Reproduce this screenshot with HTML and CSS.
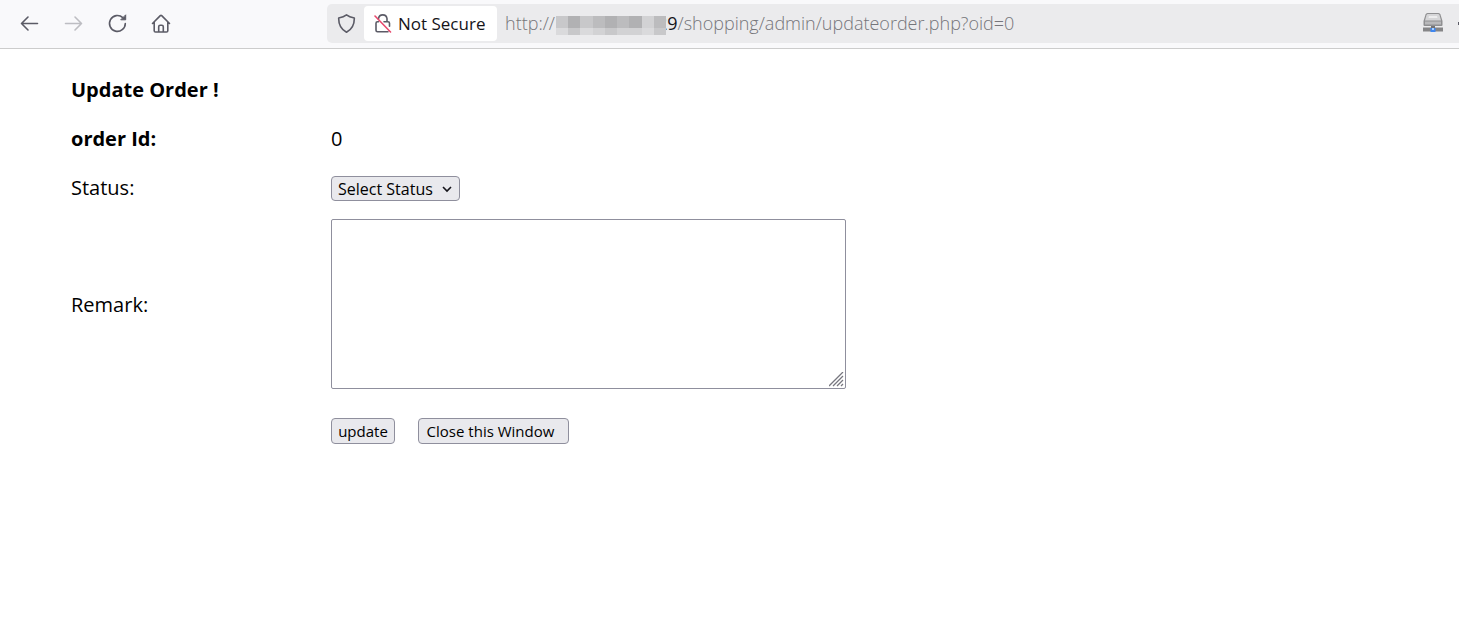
FILE: index.html
```html
<!DOCTYPE html>
<html lang="en">
<head>
<meta charset="utf-8">
<title>Update Order</title>
<link rel="stylesheet" href="styles.css">
</head>
<body>
<header class="toolbar">
  <nav class="nav" aria-label="Browser navigation">
    <button class="nav-btn" type="button" aria-label="Back">
      <svg class="icon" viewBox="0 0 20 20"><path d="M18.500 10.500H2.500M9 4 2.500 10.500 9 17"/></svg>
    </button>
    <button class="nav-btn" type="button" aria-label="Forward" disabled>
      <svg class="icon" viewBox="0 0 20 20"><path d="M2.500 10.500H18.500M12 4 18.500 10.500 12 17"/></svg>
    </button>
    <button class="nav-btn" type="button" aria-label="Reload">
      <svg class="icon" viewBox="0 0 20 20"><path d="M18.300 10.500A7.900 7.900 0 1 1 15.800 4.700"/><path class="solid" d="M18.700 2.200v4.600h-4.600z"/></svg>
    </button>
    <button class="nav-btn" type="button" aria-label="Home">
      <svg class="icon" viewBox="0 0 20 20"><path d="M1.500 10.500 9.300 2.600q.7-.6 1.400 0L18.500 10.500M3.200 9v8.700q0 1.300 1.300 1.300h11q1.300 0 1.300-1.300V9M7.700 18.800v-5q0-1.600 1.500-1.600h1.600q1.500 0 1.500 1.600v5"/></svg>
    </button>
  </nav>
  <div class="urlbar">
    <svg class="icon shield" viewBox="0 0 20 20"><path d="M10.500 1.800c2.200 1.700 4.600 2.500 7.800 3.200.2 6.700-2.300 11.300-7.800 14.200C5 16.300 2.500 11.700 2.700 5 5.900 4.300 8.300 3.500 10.500 1.800z"/></svg>
    <button class="security" type="button">
      <svg class="icon" viewBox="0 0 20 20"><path d="M6.500 6.200V5.500A4.300 4.300 0 0 1 15 5.500v3.300h1q1.500 0 1.500 1.500v3M12 8.800h3M6.500 8.800H5.500Q4 8.800 4 10.300v6.900q0 1.500 1.500 1.500h10.500"/><path class="strike" d="M3 3 18.500 19"/></svg>
      Not Secure
    </button>
    <div class="address">
      <span>http://</span>
      <span class="mosaic" aria-hidden="true">
        <i class="t3"></i><i class="t1"></i><i class="t3"></i><i class="t2"></i><i class="t1"></i><i class="t2"></i><i class="t1"></i><i class="t4"></i><i class="t2"></i>
        <i class="t5"></i><i class="t3"></i><i class="t5"></i><i class="t4"></i><i class="t3"></i><i class="t4"></i><i class="t4"></i><i class="t5"></i><i class="t3"></i>
      </span>
      <span class="host">29</span>
      <span>/shopping/admin/updateorder.php?oid=0</span>
    </div>
    <svg class="drive" viewBox="0 0 20 20">
      <path fill="#8f8f91" d="M2.500 1.500Q3 0 4.500 0h11q1.500 0 2 1.500L19.500 8v4q0 1-1 1H1.500q-1 0-1-1V8z"/>
      <path fill="#d6d6d8" d="M3.500 2Q4 1 5 1h10q1 0 1.500 1L18 7.500H2z"/>
      <path fill="#ededee" d="M6 3h8l.5 2h-9z"/>
      <path fill="#b9b9bb" d="M2 8.500h16v3H2z"/>
      <path fill="#858587" d="M0 14.500h20v4H0z"/>
      <path fill="#737375" d="M8 13h4v2H8z"/>
      <path fill="#3f86ef" d="M7.500 15h5v4h-5z"/>
      <path fill="#a9d0ff" d="M9 15h2v2H9z"/>
    </svg>
    <span class="edge-dot"></span>
  </div>
</header>
<main class="page">
  <form class="order-form">
    <h1 class="title">Update Order !</h1>
    <div class="row"><b>order Id:</b><span>0</span></div>
    <div class="row">
      <label for="status">Status:</label>
      <span class="select-wrap">
        <select id="status" class="control"><option>Select Status</option><option>In Process</option><option>Delivered</option></select>
        <svg class="chevron" viewBox="0 0 10 10"><path d="M1 3l4 4 4-4"/></svg>
      </span>
    </div>
    <div class="row remark">
      <label for="remark">Remark:</label>
      <span class="area-wrap">
        <textarea id="remark" class="area"></textarea>
        <svg class="grip" viewBox="0 0 15 15"><path d="M0 14 14 0M4 14 14 4M8 14 14 8M12 14l2-2"/></svg>
      </span>
    </div>
    <div class="row actions-row">
      <span></span>
      <div class="actions">
        <button class="control action" type="button">update</button>
        <button class="control action close" type="button">Close this Window</button>
      </div>
    </div>
  </form>
</main>
</body>
</html>
```
FILE: styles.css
```css
* { box-sizing: border-box; }
body {
  margin: 0;
  background: #fff;
  color: #000;
  font: 20px/29px "Open Sans", "Noto Sans", sans-serif;
  overflow-x: hidden;
}
button, select, textarea { font: inherit; color: inherit; margin: 0; }

.toolbar {
  display: flex;
  align-items: center;
  height: 49px;
  padding-bottom: 2px;
  background: #f9f9fb;
  border-bottom: 1px solid #ccc;
}
.nav { display: flex; gap: 4px; width: 327px; padding-left: 9px; flex: none; }
.nav-btn {
  display: flex;
  align-items: center;
  justify-content: center;
  width: 40px;
  height: 36px;
  padding: 0;
  border: 0;
  background: none;
  color: #5b5b66;
}
.nav-btn:disabled { color: #bdbdc2; }
.icon {
  flex: none;
  width: 20px;
  height: 20px;
  fill: none;
  stroke: currentColor;
  stroke-width: 1.600;
  stroke-linecap: round;
  stroke-linejoin: round;
}
.icon .solid { fill: currentColor; stroke-width: 1; }
.icon .strike { stroke: #e8486c; }

.urlbar {
  display: flex;
  align-items: center;
  flex: 1;
  height: 39px;
  border-radius: 5px 0 0 5px;
  background: #ebebed;
  color: #75757a;
  font-size: 18px;
  font-weight: 300;
}
.shield { margin: 0 8px 0 9px; color: #5b5b66; }
.security {
  display: flex;
  align-items: center;
  gap: 6px;
  width: 133px;
  height: 35px;
  padding: 0 0 0 8px;
  border: 0;
  border-radius: 4px;
  background: #fff;
  color: #15141a;
  font-size: 17px;
  font-weight: 400;
  white-space: nowrap;
}
.security .icon { color: #5b5b66; }
.address { display: flex; align-items: center; flex: 1; padding-left: 8px; }
.mosaic {
  position: relative;
  z-index: 1;
  display: grid;
  grid-template-columns: repeat(9, 1fr);
  grid-template-rows: 12px 7px;
  width: 110px;
  margin: 4px -9px 0 1px;
}
.t1 { background: #b1b1b3; }
.t2 { background: #bcbcbe; }
.t3 { background: #c8c8ca; }
.t4 { background: #d2d2d4; }
.t5 { background: #dadadc; }
.host { color: #15141a; font-weight: 400; }
.drive { flex: none; width: 20px; height: 20px; margin-right: 15px; }
.edge-dot { flex: none; width: 1px; height: 3px; background: #5b5b66; }

.page { padding: 26px 71px; }
.order-form { display: flex; flex-direction: column; gap: 20px; }
.title { margin: 0; font-size: 20px; line-height: 29px; }
.row { display: grid; grid-template-columns: 260px 1fr; align-items: center; }
.control {
  height: 26px;
  padding: 0 6px;
  border: 1px solid #8f8f9d;
  border-radius: 4px;
  background: #e9e9ed;
  font-size: 16px;
  line-height: 22px;
}
.select-wrap { position: relative; justify-self: start; display: flex; margin-top: 2px; }
.select-wrap .control { width: 129px; height: 25px; appearance: none; }
.chevron {
  position: absolute;
  right: 8px;
  top: 8px;
  width: 10px;
  height: 10px;
  fill: none;
  stroke: #15141a;
  stroke-width: 1.600;
  pointer-events: none;
}
.remark { margin-top: -3px; }
.area-wrap { position: relative; display: flex; width: 515px; max-width: 100%; }
.area {
  width: 100%;
  height: 170px;
  border: 1px solid #8f8f9d;
  border-radius: 2px;
  background: #fff;
  resize: none;
}
.grip {
  position: absolute;
  right: 2px;
  bottom: 2px;
  width: 15px;
  height: 15px;
  fill: none;
  stroke: #77777f;
  stroke-width: 1.300;
  pointer-events: none;
}
.actions-row { margin-top: 9px; }
.actions { display: flex; gap: 23px; }
.action { min-width: 64px; font-size: 15px; }
.close { min-width: 151px; padding-right: 12px; }
```
